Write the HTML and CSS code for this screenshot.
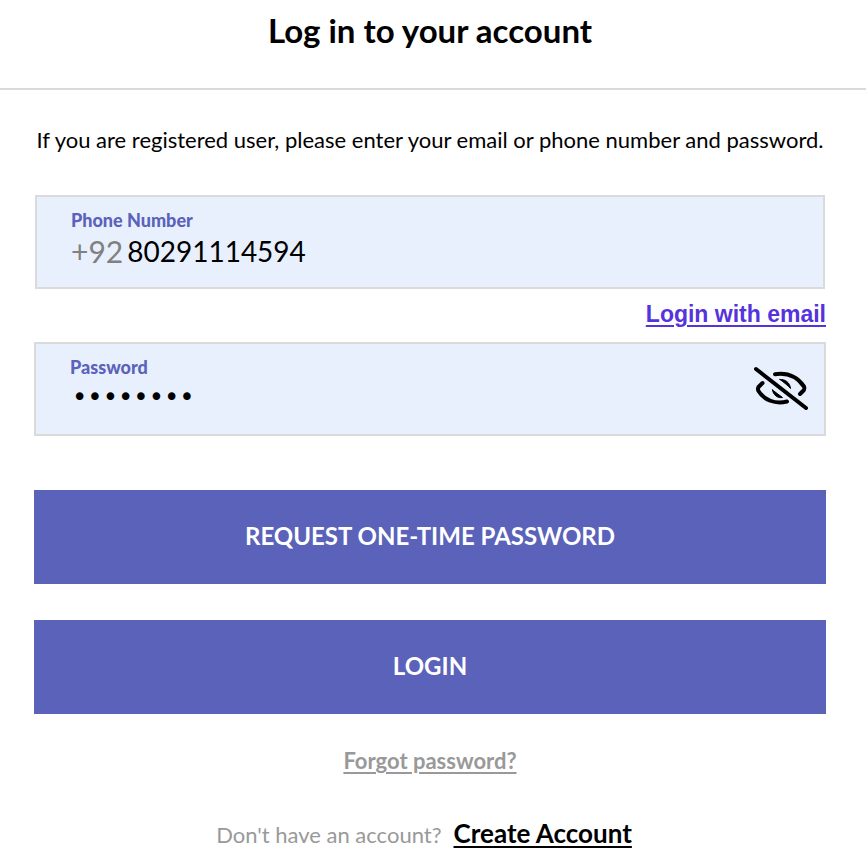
FILE: index.html
```html
<!DOCTYPE html>
<html lang="en">
<head>
<meta charset="utf-8">
<meta name="viewport" content="width=device-width, initial-scale=1">
<title>Log in</title>
<link rel="stylesheet" href="styles.css">
</head>
<body>
<header class="header">
  <h1 class="title">Log in to your account</h1>
</header>
<main class="content">
  <p class="intro">If you are registered user, please enter your email or phone number and password.</p>
  <form class="form">
    <div class="field field-phone">
      <div class="field-body">
        <label class="label" for="phone">Phone Number</label>
        <div class="phone-row">
          <span class="prefix">+92</span>
          <input class="input" id="phone" type="tel" value="80291114594">
        </div>
      </div>
    </div>
    <a class="email-link" href="#">Login with email</a>
    <div class="field">
      <div class="field-body">
        <label class="label" for="password">Password</label>
        <input class="input input-password" id="password" type="password" value="password">
      </div>
      <button class="toggle" type="button" aria-label="Show password">
        <svg width="56" height="46" viewBox="0 0 56 46" fill="none" stroke="#000" stroke-width="4" stroke-linecap="round" stroke-linejoin="round">
          <path d="M22 8.200C34 6.500 44.500 11 51 20.500Q52 22.500 51 24L47 28"/>
          <path d="M9.500 17L5.500 21Q4.500 23 5.500 25C11 34 22 38.500 34 35.500"/>
          <path d="M27 13.500C32 13 37 16.500 37.500 22.500C35 19.500 31 16.500 27 13.500Z" fill="#000" stroke-width="1"/>
          <path d="M19.500 24C20 29 25 32.500 29.500 31.500C26 29 23 26.500 19.500 24Z" fill="#000" stroke-width="1"/>
          <path d="M3 3L53 42"/>
        </svg>
      </button>
    </div>
    <div class="actions">
      <button class="button" type="button">REQUEST ONE-TIME PASSWORD</button>
      <button class="button" type="submit">LOGIN</button>
    </div>
  </form>
  <a class="forgot" href="#">Forgot password?</a>
  <p class="signup">Don't have an account? <a class="create" href="#">Create Account</a></p>
</main>
</body>
</html>
```
FILE: styles.css
```css
* {
  box-sizing: border-box;
}

body {
  margin: 0;
  background: #fff;
  color: #000;
  font-family: Lato, "Liberation Sans", sans-serif;
}

.header {
  padding: 10px 40px 38px 34px;
  border-bottom: 2px solid #dadada;
  text-align: center;
}

.title {
  margin: 0;
  font-size: 33px;
  line-height: 40px;
  font-weight: 700;
}

.content {
  display: flex;
  flex-direction: column;
  align-items: center;
  padding: 35px 40px 8px 34px;
}

.intro {
  margin: 0 0 40px;
  font-size: 22px;
  line-height: 30px;
  text-align: center;
}

.form {
  display: flex;
  flex-direction: column;
  width: 100%;
}

.field {
  display: flex;
  align-items: center;
  height: 94px;
  padding: 0 15px 0 34px;
  border: 2px solid #dadada;
  background: #e8f0fe;
}

.field-phone {
  margin: 0 1px;
}

.field-body {
  flex: 1;
  min-width: 0;
  height: 72px;
}

.label {
  display: block;
  color: #5b62b9;
  font-size: 18px;
  line-height: 28px;
  font-weight: 900;
}

.phone-row {
  display: flex;
  align-items: center;
  gap: 4px;
}

.prefix {
  color: #808080;
  font-size: 30px;
  line-height: 34px;
}

.input {
  display: block;
  flex: 1;
  min-width: 0;
  width: 100%;
  height: 34px;
  padding: 0;
  border: 0;
  outline: 0;
  background: transparent;
  color: #000;
  font-family: inherit;
  font-size: 28px;
}

.input-password {
  height: 32px;
  padding: 0 2px;
  font-family: "DejaVu Sans", sans-serif;
  font-size: 26px;
}

.email-link {
  align-self: flex-end;
  margin: 9px 0 12px;
  color: #5533dd;
  font-family: "Liberation Sans", sans-serif;
  font-size: 23px;
  line-height: 32px;
  font-weight: 700;
}

.toggle {
  display: flex;
  padding: 0;
  border: 0;
  background: transparent;
}

.actions {
  display: flex;
  flex-direction: column;
  gap: 36px;
  margin-top: 54px;
}

.button {
  height: 94px;
  padding: 0 24px 4px;
  border: 0;
  background: #5b62b9;
  color: #fff;
  font-family: inherit;
  font-size: 24px;
  font-weight: 700;
}

.forgot {
  margin-top: 32px;
  color: #999;
  font-size: 22px;
  line-height: 30px;
  font-weight: 700;
}

.signup {
  display: flex;
  align-items: baseline;
  gap: 12px;
  margin: 40px 12px 0 0;
  color: #999;
  font-size: 22px;
  line-height: 34px;
}

.create {
  color: #000;
  font-size: 26px;
  font-weight: 700;
}

.forgot,
.create,
.email-link {
  text-decoration-thickness: 2px;
  text-underline-offset: 3px;
}
```
